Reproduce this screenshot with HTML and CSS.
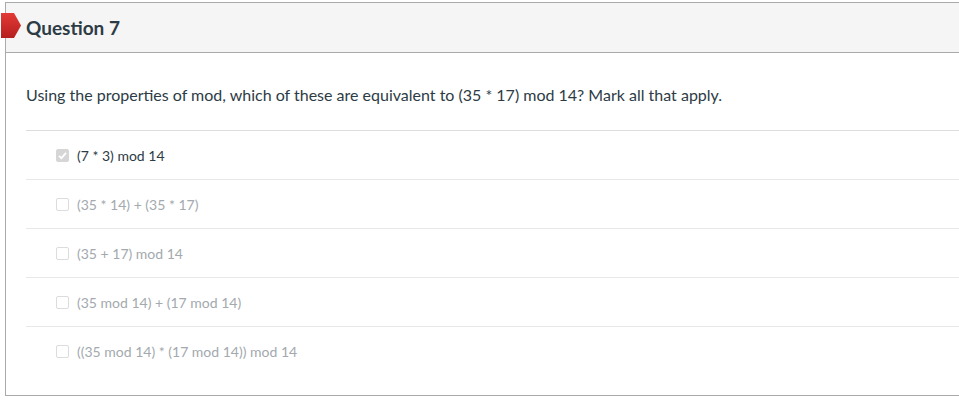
FILE: index.html
```html
<!DOCTYPE html>
<html>
<head>
<meta charset="utf-8">
<link rel="stylesheet" href="styles.css">
</head>
<body>
<div class="question">
  <div class="flag"></div>
  <div class="header"><h2 class="title">Question 7</h2></div>
  <div class="body">
    <p class="prompt">Using the properties of mod, which of these are equivalent to (35 * 17) mod 14? Mark all that apply.</p>
    <div class="answers">
      <div class="answer selected"><span class="box checked"><svg viewBox="0 0 13 13" width="13" height="13"><path d="M3 6.8 L5.4 9.2 L10 3.8" fill="none" stroke="#fff" stroke-width="1.8"/></svg></span><span class="label">(7 * 3) mod 14</span></div>
      <div class="answer"><span class="box"></span><span class="label">(35 * 14) + (35 * 17)</span></div>
      <div class="answer"><span class="box"></span><span class="label">(35 + 17) mod 14</span></div>
      <div class="answer"><span class="box"></span><span class="label">(35 mod 14) + (17 mod 14)</span></div>
      <div class="answer"><span class="box"></span><span class="label">((35 mod 14) * (17 mod 14)) mod 14</span></div>
    </div>
  </div>
</div>
</body>
</html>
```
FILE: styles.css
```css
html, body { margin: 0; padding: 0; background: #fff; }
body { font-family: Lato, "Noto Sans", sans-serif; color: #2d3b45; }
.question {
  position: relative;
  margin: 2px 0 0 5px;
  border: 1px solid #aaaaaa;
  border-right: none;
  height: 394px;
  box-sizing: border-box;
}
.flag {
  position: absolute;
  left: -5px; top: 10px;
  width: 20px; height: 25px;
  background: linear-gradient(#e33a36, #b51f1f);
  clip-path: polygon(0 0, 13px 0, 20px 12.5px, 13px 25px, 0 25px);
}
.header {
  background: #f5f5f5;
  border-bottom: 1px solid #aaaaaa;
  height: 49px;
  display: flex; align-items: center;
  padding-left: 20px;
}
.title { margin: 0; font-size: 19px; font-weight: 700; color: #2d3b45; }
.body { padding: 0 0 0 20px; }
.prompt { margin: 0; padding-top: 32px; height: 45px; font-size: 16px; line-height: 20px; }
.answers { border-top: 1px solid #dddddd; }
.answer {
  height: 48px; display: flex; align-items: center;
  padding-left: 30px; gap: 8px;
  border-bottom: 1px solid #e8e8e8;
  font-size: 14px; color: #a3a9ae;
}
.answer:last-child { border-bottom: none; }
.answer.selected { color: #2d3b45; }
.box {
  width: 13px; height: 13px; box-sizing: border-box;
  border: 1px solid #dcdcdc; border-radius: 2px; background: #fff;
  display: inline-block; flex: none;
}
.box.checked { background: #d6d6d6; border-color: #d6d6d6; }
.box svg { display: block; margin: -1px; }
```
